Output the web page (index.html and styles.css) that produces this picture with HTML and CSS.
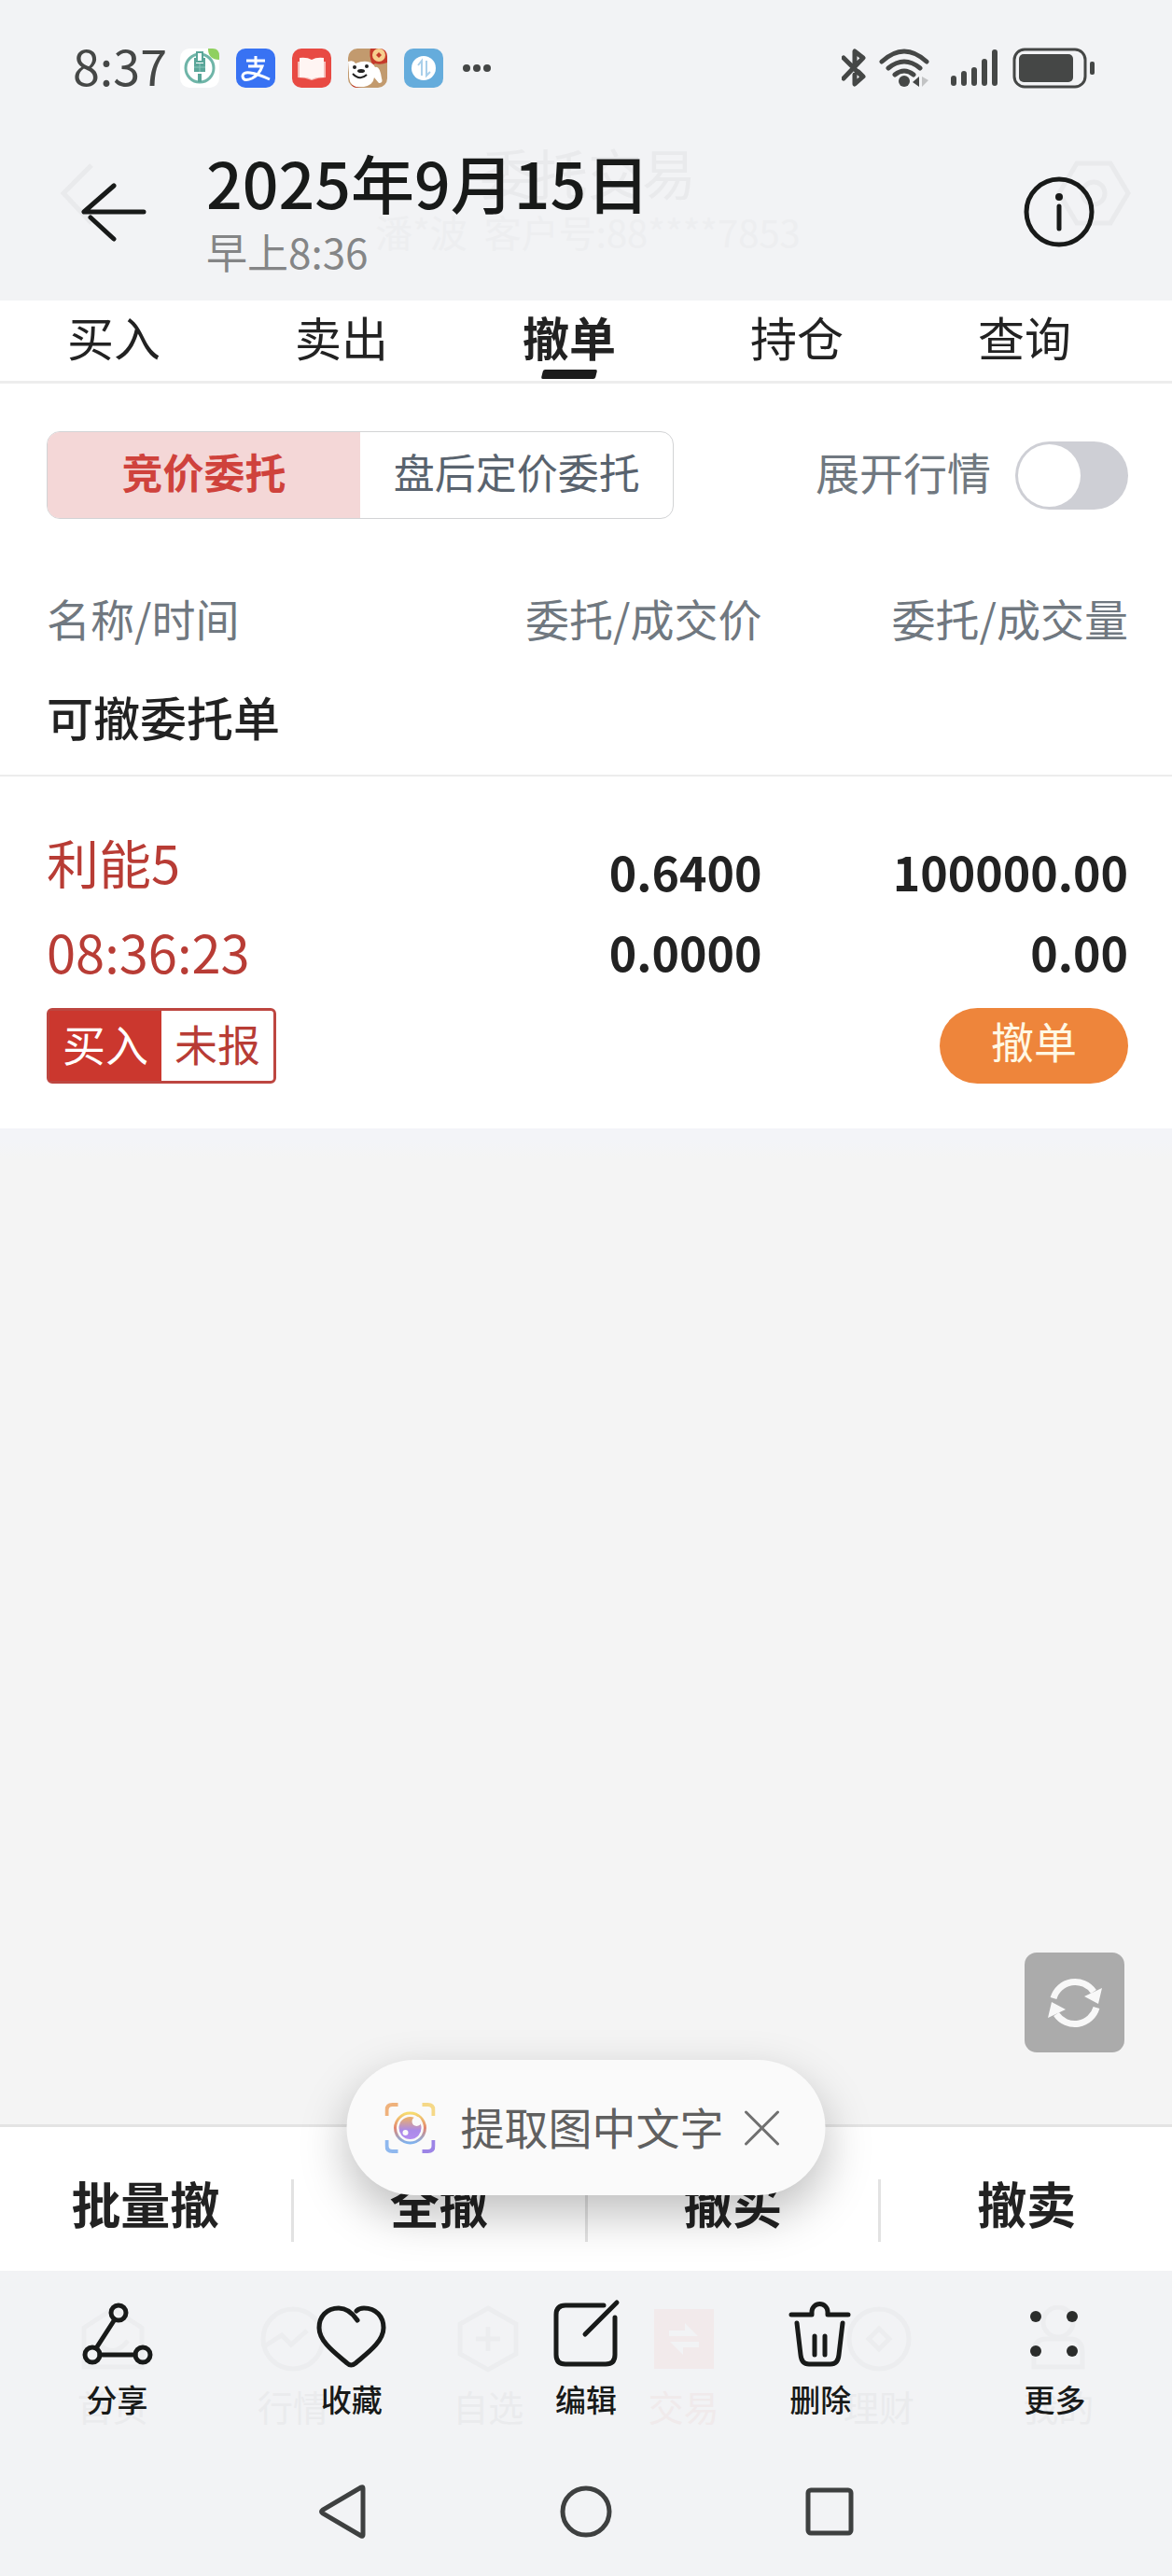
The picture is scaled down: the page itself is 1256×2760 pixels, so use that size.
FILE: index.html
```
<!DOCTYPE html>
<html lang="zh-CN">
<head>
    <meta charset="UTF-8">
    <meta name="viewport" content="width=device-width, initial-scale=1.0">
    <title>撤单</title>
    <link rel="stylesheet" href="styles.css">
</head>
<body>
    <header class="top-bar">
        <!-- 底层交易页的标题，透过半透明栏显示 -->
        <div class="ghost-header" aria-hidden="true">
            <svg class="ghost-icon" viewBox="0 0 80 80"><path d="M50 10 20 40 50 72"/></svg>
            <div class="ghost-title">
                <div class="ghost-name">委托交易</div>
                <div class="ghost-account">潘*波&nbsp; 客户号:88****7853</div>
            </div>
            <svg class="ghost-icon" viewBox="0 0 80 80"><path d="M22 8H58L77 40 58 72H22L3 40Z"/><circle cx="40" cy="40" r="12"/></svg>
        </div>

        <div class="status-bar">
            <span class="clock">8:37</span>
            <div class="app-icons">
                <svg viewBox="0 0 42 42">
                    <rect width="42" height="42" rx="10" fill="#fff"/>
                    <circle cx="21" cy="21" r="15" fill="none" stroke="#6fb5a8" stroke-width="3"/>
                    <path d="M18 4H24V14H18Z" fill="#fff" stroke="#5aa699" stroke-width="2"/>
                    <path d="M15 10V25H27V10H25V16H17V10ZM19 27H23V36H19Z" fill="#5aa699"/>
                    <path d="M15 20H27M21 16V25" fill="none" stroke="#8cc7bc" stroke-width="1"/>
                    <path d="M30 0H35Q42 0 42 8V12Q30 12 30 0Z" fill="#8fd05f"/>
                </svg>
                <svg viewBox="0 0 42 42">
                    <rect width="42" height="42" rx="10" fill="#3872f3"/>
                    <path d="M11 13H31M21 8V19M13 19H28Q25 28 17 32 8 36 7 30 7 25 15 26 23 27 36 33" fill="none" stroke="#fff" stroke-width="3"/>
                </svg>
                <svg viewBox="0 0 42 42">
                    <rect width="42" height="42" rx="10" fill="#e84a43"/>
                    <path d="M6 14H36V31Q28 31 21 34 14 31 6 31Z" fill="#f6bdb8"/>
                    <path d="M8 10Q16 9 21 12 26 9 34 10V31Q26 30 21 33 16 30 8 31Z" fill="#fff5f3"/>
                </svg>
                <svg viewBox="0 0 42 42">
                    <rect width="42" height="42" rx="10" fill="#c29a6e"/>
                    <path d="M24 0H33Q42 0 42 9V15Q35 18 29 16L26 18Q22 6 24 0Z" fill="#c53a2a"/>
                    <circle cx="33" cy="7" r="7" fill="#f7cf8e"/>
                    <path d="M33 4 36 7 33 10 30 7Z" fill="#c53a2a"/>
                    <path d="M0 14Q6 12 8 16 20 11 27 17L29 20Q34 18 36 32 38 37 33 37L28 31Q27 39 17 41H8Q0 38 1 26Z" fill="#fff"/>
                    <circle cx="7" cy="20" r="2" fill="#222"/><circle cx="20" cy="19" r="2" fill="#222"/>
                    <ellipse cx="14" cy="24" rx="4" ry="2" fill="#222"/>
                    <path d="M5 27Q13 35 20 28" fill="none" stroke="#222" stroke-width="2"/>
                    <path d="M3 38Q8 42 15 42H10Q5 42 3 38Z" fill="#c53a2a"/>
                </svg>
                <svg viewBox="0 0 42 42">
                    <rect width="42" height="42" rx="10" fill="#65acdc"/>
                    <circle cx="21" cy="21" r="13" fill="#fff"/>
                    <path d="M15 18 19 13V29M24 13V29L28 25" fill="none" stroke="#a9cfea" stroke-width="2"/>
                </svg>
            </div>
            <svg class="dots" viewBox="0 0 30 8"><circle cx="4" cy="4" r="4"/><circle cx="15" cy="4" r="4"/><circle cx="26" cy="4" r="4"/></svg>

            <div class="system-icons">
                <svg class="bluetooth" viewBox="0 0 26 44"><path d="M2 11 20 29M2 33 23 11 14 4V20M18 26 23 31 14 39V29"/></svg>
                <svg class="wifi" viewBox="0 0 54 44">
                    <path d="M3 15Q27-7 51 15M10 22Q27 8 44 22M17 29Q27 21 37 29"/>
                    <circle cx="27" cy="36" r="6"/>
                    <path class="up" d="M36 37 43 31V42Z"/>
                    <path class="down" d="M46 31 53 35 46 42Z"/>
                </svg>
                <svg class="signal" viewBox="0 0 52 44"><path d="M4 33V38M15 28V38M26 24V38M37 15V38M48 5V38"/></svg>
                <svg class="battery" viewBox="0 0 88 44">
                    <rect class="shell" x="2" y="2" width="76" height="40" rx="11"/>
                    <rect x="7" y="7" width="58" height="30" rx="5"/>
                    <rect x="83" y="15" width="5" height="14" rx="2"/>
                </svg>
            </div>
        </div>

        <div class="photo-title">
            <button class="icon-button" type="button" aria-label="返回">
                <svg viewBox="0 0 76 76"><path d="M37 10 5 38H69M12 44 37 67"/></svg>
            </button>
            <div class="photo-date">
                <h1>2025年9月15日</h1>
                <p>早上8:36</p>
            </div>
            <button class="icon-button" type="button" aria-label="详情">
                <svg viewBox="0 0 76 76"><circle cx="38" cy="38" r="35"/><path d="M38 32V56"/><circle class="solid" cx="38" cy="22" r="4"/></svg>
            </button>
        </div>
    </header>

    <nav class="tabs">
        <a href="#">买入</a>
        <a href="#">卖出</a>
        <a href="#" class="active">撤单</a>
        <a href="#">持仓</a>
        <a href="#">查询</a>
    </nav>

    <main>
        <section class="panel">
            <div class="filters">
                <div class="segment">
                    <button class="selected" type="button">竞价委托</button>
                    <button type="button">盘后定价委托</button>
                </div>
                <label class="quote-label" for="quoteSwitch">展开行情</label>
                <input class="switch" type="checkbox" id="quoteSwitch">
            </div>

            <table class="orders">
                <thead>
                    <tr>
                        <th class="col-name">名称/时间</th>
                        <th class="col-price">委托/成交价</th>
                        <th class="col-amount">委托/成交量</th>
                    </tr>
                </thead>
                <tbody>
                    <tr class="group-row">
                        <td colspan="3">可撤委托单</td>
                    </tr>
                    <tr class="first-row">
                        <td class="stock">利能5</td>
                        <td class="number">0.6400</td>
                        <td class="number">100000.00</td>
                    </tr>
                    <tr>
                        <td class="stock">08:36:23</td>
                        <td class="number">0.0000</td>
                        <td class="number">0.00</td>
                    </tr>
                    <tr class="state-row">
                        <td colspan="2">
                            <span class="state"><span class="side">买入</span><span class="report">未报</span></span>
                        </td>
                        <td><button class="cancel" type="button">撤单</button></td>
                    </tr>
                </tbody>
            </table>
        </section>

        <button class="refresh" type="button" aria-label="刷新">
            <svg viewBox="0 0 60 60">
                <path class="arc" d="M7 25A24 24 0 0 1 50 18M53 35A24 24 0 0 1 10 42"/>
                <path d="M59 14 55 31 40 23ZM1 46 5 29 20 37Z"/>
            </svg>
        </button>
    </main>

    <div class="actions">
        <button type="button">批量撤</button>
        <button type="button">全撤</button>
        <button type="button">撤买</button>
        <button type="button">撤卖</button>

        <div class="extract">
            <svg class="scan" viewBox="0 0 54 54">
                <defs>
                    <linearGradient id="scanColor" x1="0" y1="0" x2="0" y2="1">
                        <stop offset="0" stop-color="#f7dc6f"/>
                        <stop offset="50%" stop-color="#e2856f"/>
                        <stop offset="1" stop-color="#7fb2ee"/>
                    </linearGradient>
                    <linearGradient id="eyeColor" x1="0" y1="0" x2="0" y2="1">
                        <stop offset="0" stop-color="#eeb063"/>
                        <stop offset="60%" stop-color="#ab8ae8"/>
                        <stop offset="1" stop-color="#b48df0"/>
                    </linearGradient>
                </defs>
                <path stroke="#efb27c" d="M2 14V8Q2 2 8 2H14"/>
                <path stroke="#f5d887" d="M40 2H46Q52 2 52 8V14"/>
                <path stroke="#8fb8ee" d="M2 40V46Q2 52 8 52H14"/>
                <path stroke="#9c84e6" d="M40 52H46Q52 52 52 46V40"/>
                <circle cx="27" cy="27" r="16" stroke="url(#scanColor)" stroke-width="3"/>
                <circle class="eye" cx="27" cy="27" r="12"/>
                <circle class="glint" cx="34" cy="20" r="5"/>
                <circle class="glint" cx="22" cy="32" r="3"/>
            </svg>
            <button class="extract-text" type="button">提取图中文字</button>
            <button class="close" type="button" aria-label="关闭">
                <svg viewBox="0 0 38 38"><path d="M2 2 36 36M36 2 2 36"/></svg>
            </button>
        </div>
    </div>

    <footer class="bottom-bar">
        <!-- 底层应用的导航，透过半透明栏显示 -->
        <div class="ghost-nav" aria-hidden="true">
            <div><svg viewBox="0 0 72 72"><path d="M5 66V24L36 4 67 24V66ZM20 40Q36 58 52 38"/></svg>首页</div>
            <div><svg viewBox="0 0 72 72"><circle cx="36" cy="36" r="32"/><path d="M5 44 24 32 34 42 51 27"/></svg>行情</div>
            <div><svg viewBox="0 0 72 72"><path d="M36 3 66 20V52L36 69 6 52V20ZM36 23V49M23 36H49"/></svg>自选</div>
            <div class="ghost-trade"><svg viewBox="0 0 72 72"><rect x="4" y="4" width="64" height="64" fill="#f2eaeb"/><path d="M20 33V27H37V19L51 33ZM52 39V45H35V53L21 39Z" fill="#f2f3f5"/></svg>交易</div>
            <div><svg viewBox="0 0 72 72"><circle cx="36" cy="36" r="32"/><path d="M36 25 47 36 36 47 25 36Z"/></svg>理财</div>
            <div><svg viewBox="0 0 72 72"><circle cx="36" cy="18" r="16"/><path d="M10 66V50Q10 36 24 36H48Q62 36 62 50V66Z"/></svg>我的</div>
        </div>

        <div class="tools">
            <button type="button">
                <svg viewBox="0 0 76 76"><circle cx="39" cy="15" r="8"/><circle cx="11" cy="60" r="8"/><circle cx="65" cy="60" r="8"/><path d="M35 22 15 53M19 60H57"/></svg>
                分享
            </button>
            <button type="button">
                <svg viewBox="0 0 76 76"><path d="M44 23C38 14 32 10 24 10 11 10 3 19 3 31 3 46 20 58 33 69Q37 73 42 69C55 58 72 46 72 31 72 19 64 10 51 10 48 10 45 11 43 13"/></svg>
                收藏
            </button>
            <button type="button">
                <svg viewBox="0 0 76 76"><path d="M57 7H16Q6 7 6 17V60Q6 70 16 70H59Q69 70 69 60V20M71 4 37 38"/></svg>
                编辑
            </button>
            <button type="button">
                <svg viewBox="0 0 76 76"><path d="M7 17H29V14A8 8 0 0 1 46 14V17H68M13 26 17 60Q18 70 26 70H49Q57 70 58 60L62 26M32 40V60M43 40V60"/></svg>
                删除
            </button>
            <button type="button">
                <svg class="more" viewBox="0 0 76 76"><circle cx="18" cy="19" r="6"/><circle cx="57" cy="19" r="6"/><circle cx="18" cy="56" r="6"/><circle cx="57" cy="56" r="6"/></svg>
                更多
            </button>
        </div>

        <div class="system-nav">
            <button type="button" aria-label="返回"><svg viewBox="0 0 60 60"><path d="M52 5V55Q52 57 50 56L9 32Q6 30 9 28L50 4Q52 3 52 5Z"/></svg></button>
            <button type="button" aria-label="主屏幕"><svg viewBox="0 0 60 60"><circle cx="30" cy="30" r="25"/></svg></button>
            <button type="button" aria-label="最近任务"><svg viewBox="0 0 60 60"><rect x="7" y="7" width="46" height="46" rx="3"/></svg></button>
        </div>
    </footer>
</body>
</html>
```
FILE: styles.css
```
* {
    box-sizing: border-box;
}

body {
    margin: 0;
    min-height: 100vh;
    display: flex;
    flex-direction: column;
    background-color: #f4f4f4;
    color: #222;
    font-family: "Noto Sans CJK SC", sans-serif;
}

button {
    padding: 0;
    border: none;
    background: none;
    color: inherit;
    font-family: inherit;
    cursor: pointer;
}

svg {
    display: block;
    fill: none;
}

/* 顶部栏 */
.top-bar {
    position: relative;
    height: 322px;
    background-color: #f2f3f5;
}

.ghost-header {
    position: absolute;
    top: 150px;
    left: 48px;
    right: 44px;
    display: flex;
    justify-content: space-between;
    color: #e9eaec;
    text-align: center;
}

.ghost-icon {
    width: 80px;
    height: 80px;
    margin-top: 17px;
    stroke: #e9eaec;
    stroke-width: 5;
}

.ghost-name {
    font-size: 58px;
    line-height: 68px;
}

.ghost-account {
    color: #edeef0;
    font-size: 40px;
    line-height: 60px;
}

.status-bar {
    position: relative;
    display: flex;
    align-items: center;
    height: 146px;
    padding: 0 83px 0 78px;
}

.clock {
    margin-right: 14px;
    padding-bottom: 6px;
    color: #454746;
    font-size: 52px;
    line-height: 60px;
}

.app-icons {
    display: flex;
    gap: 18px;
}

.app-icons svg {
    width: 42px;
    height: 42px;
}

.dots {
    width: 30px;
    height: 8px;
    margin-left: 21px;
    fill: #454746;
}

.system-icons {
    display: flex;
    margin-left: auto;
    fill: #454746;
    stroke: #454746;
}

.system-icons svg {
    height: 44px;
    fill: inherit;
}

.bluetooth {
    width: 26px;
    margin-right: 14px;
}

.wifi {
    width: 54px;
    margin-right: 22px;
}

.signal {
    width: 52px;
    margin-right: 15px;
}

.battery {
    width: 88px;
    stroke: none;
}

.bluetooth path,
.wifi path,
.signal path {
    fill: none;
    stroke-width: 5;
    stroke-linecap: round;
    stroke-linejoin: round;
}

.signal path {
    stroke-width: 6;
}

.wifi circle {
    stroke: none;
}

.wifi .up {
    fill: #454746;
    stroke: none;
}

.wifi .down {
    fill: #c2c3c4;
    stroke: none;
}

.battery .shell {
    fill: none;
    stroke: #454746;
    stroke-width: 3;
}

.photo-title {
    position: relative;
    display: flex;
    align-items: center;
    height: 162px;
    padding: 0 83px 0 85px;
}

.icon-button svg {
    width: 76px;
    height: 76px;
    stroke: #181a19;
    stroke-width: 5;
    stroke-linecap: round;
    stroke-linejoin: round;
}

.icon-button .solid {
    fill: #181a19;
    stroke: none;
}

.photo-date {
    flex: 1;
    padding-left: 60px;
}

.photo-date h1 {
    margin: 0;
    color: #181a19;
    font-size: 68px;
    font-weight: 500;
    line-height: 84px;
}

.photo-date p {
    margin: 0;
    color: #848586;
    font-size: 44px;
    line-height: 64px;
}

/* 交易标签 */
.tabs {
    display: flex;
    height: 89px;
    padding-right: 36px;
    background-color: #fff;
    border-bottom: 3px solid #ededed;
}

.tabs a {
    position: relative;
    flex: 1;
    color: #222;
    font-size: 50px;
    line-height: 76px;
    text-align: center;
    text-decoration: none;
}

.tabs .active {
    font-weight: 700;
}

.tabs .active::after {
    content: "";
    position: absolute;
    bottom: 2px;
    left: 50%;
    width: 58px;
    height: 10px;
    margin-left: -29px;
    background-color: #1c1c1c;
    border-radius: 2px;
    transform: skewX(-14deg);
}

main {
    position: relative;
    flex: 1;
    background-image: linear-gradient(#f3f4f8, #f3f4f8 810px, #f4f4f4 830px);
}

.panel {
    background-color: #fff;
}

.filters {
    display: flex;
    align-items: center;
    padding: 51px 47px 0 50px;
}

.segment {
    display: flex;
    width: 58%;
    height: 94px;
    border: 1px solid #d2d3d5;
    border-radius: 14px;
    overflow: hidden;
}

.segment button {
    flex: 1;
    padding-bottom: 8px;
    color: #59636e;
    font-size: 44px;
    white-space: nowrap;
}

.segment .selected {
    background-color: #f4d7d7;
    color: #cf423c;
    font-weight: 700;
}

.quote-label {
    margin-left: auto;
    padding-bottom: 8px;
    color: #707880;
    font-size: 47px;
    line-height: 60px;
}

.switch {
    appearance: none;
    width: 121px;
    height: 73px;
    margin: 0 0 0 26px;
    padding: 3px;
    background-color: #cecfd5;
    border-radius: 37px;
}

.switch::before {
    content: "";
    display: block;
    width: 67px;
    height: 67px;
    background-color: #fff;
    border-radius: 50%;
}

.switch:checked::before {
    margin-left: auto;
}

/* 委托列表 */
.orders {
    width: 100%;
    margin-top: 64px;
    border-collapse: collapse;
    table-layout: fixed;
}

.orders th,
.orders td {
    padding: 0;
    text-align: right;
    vertical-align: top;
}

.orders th {
    height: 92px;
    color: #707880;
    font-size: 47px;
    font-weight: 400;
    line-height: 84px;
}

.orders th:first-child,
.orders td:first-child {
    padding-left: 50px;
    text-align: left;
}

.orders th:last-child,
.orders td:last-child {
    padding-right: 47px;
}

.col-name {
    width: 35%;
}

.col-price {
    width: 30%;
}

.col-amount {
    width: 35%;
}

.orders .group-row td {
    padding-bottom: 8px;
    border-bottom: 2px solid #ececec;
    font-size: 50px;
    font-weight: 500;
    line-height: 110px;
}

.orders .stock {
    color: #b83c35;
    font-size: 56px;
    line-height: 86px;
}

.orders .number {
    font-size: 50px;
    font-weight: 700;
    line-height: 86px;
}

.orders .first-row td {
    padding-top: 58px;
}

.orders .first-row .stock {
    padding-top: 48px;
    padding-bottom: 10px;
}

.orders .state-row td {
    padding-top: 18px;
    padding-bottom: 48px;
}

.state {
    display: inline-flex;
    border: 3px solid #bd4640;
    border-radius: 6px;
    color: #b83c35;
    font-size: 46px;
    line-height: 68px;
    vertical-align: top;
}

.state span {
    padding: 0 14px 7px;
}

.state .side {
    background-color: #cb372e;
    color: #fff;
}

.cancel {
    width: 202px;
    height: 81px;
    padding-bottom: 14px;
    background-color: #ee853b;
    border-radius: 41px;
    color: #fff8e4;
    font-size: 46px;
    line-height: 66px;
    vertical-align: top;
}

.refresh {
    position: absolute;
    right: 51px;
    bottom: 77px;
    width: 107px;
    height: 107px;
    background-color: #ababab;
    border-radius: 13px;
}

.refresh svg {
    width: 60px;
    height: 60px;
    margin: 0 auto;
    fill: #f8f8f8;
}

.refresh .arc {
    fill: none;
    stroke: #f8f8f8;
    stroke-width: 7;
}

/* 批量操作 */
.actions {
    position: relative;
    display: flex;
    align-items: center;
    height: 157px;
    background-color: #fff;
    border-top: 3px solid #e3e3e3;
}

.actions > button {
    flex: 1;
    height: 67px;
    margin-top: 24px;
    padding-bottom: 16px;
    border-right: 3px solid #e2e2e2;
    font-size: 53px;
    font-weight: 700;
    line-height: 47px;
}

.actions > button:last-of-type {
    border-right: none;
}

.extract {
    position: absolute;
    left: 50%;
    bottom: 81px;
    display: flex;
    align-items: center;
    height: 145px;
    padding: 0 49px 0 41px;
    background-color: #fafafa;
    border-radius: 73px;
    box-shadow: 0 20px 50px rgba(0, 0, 0, 0.26);
    transform: translateX(-50%);
}

.scan {
    width: 54px;
    height: 54px;
    stroke-width: 4;
}

.scan .eye {
    fill: url(#eyeColor);
    stroke: none;
}

.scan .glint {
    fill: #fafafa;
}

.extract-text {
    margin: 0 22px 4px 27px;
    color: #606060;
    font-size: 47px;
    line-height: 60px;
    white-space: nowrap;
}

.close svg {
    width: 38px;
    height: 38px;
    stroke: #707070;
    stroke-width: 3;
    stroke-linecap: round;
}

/* 底部栏 */
.bottom-bar {
    position: relative;
    height: 327px;
    background-color: #f2f3f5;
}

.ghost-nav {
    position: absolute;
    top: 37px;
    left: 0;
    right: 0;
    display: grid;
    grid-template-columns: repeat(6, 1fr);
    color: #eaebed;
    font-size: 38px;
    line-height: 56px;
    text-align: center;
}

.ghost-nav div:first-child {
    padding-left: 32px;
}

.ghost-nav div:last-child {
    padding-right: 34px;
}

.ghost-nav svg {
    width: 72px;
    height: 72px;
    margin: 0 auto 8px;
    stroke: #ecedef;
    stroke-width: 5;
}

.ghost-nav .ghost-trade {
    color: #f0eaeb;
}

.ghost-nav .ghost-trade svg {
    stroke: none;
}

.tools {
    position: relative;
    display: flex;
    padding-top: 30px;
}

.tools button {
    flex: 1;
    color: #181a19;
    font-size: 33px;
    font-weight: 500;
    line-height: 48px;
}

.tools svg {
    width: 76px;
    height: 76px;
    margin: 0 auto 7px;
    stroke: #181a19;
    stroke-width: 5;
    stroke-linecap: round;
    stroke-linejoin: round;
}

.tools .more {
    fill: #2b2d2c;
    stroke: none;
}

.system-nav {
    display: flex;
    justify-content: center;
    gap: 201px;
    margin-top: 67px;
}

.system-nav svg {
    width: 60px;
    height: 60px;
    stroke: #3e4040;
    stroke-width: 5;
}
```
